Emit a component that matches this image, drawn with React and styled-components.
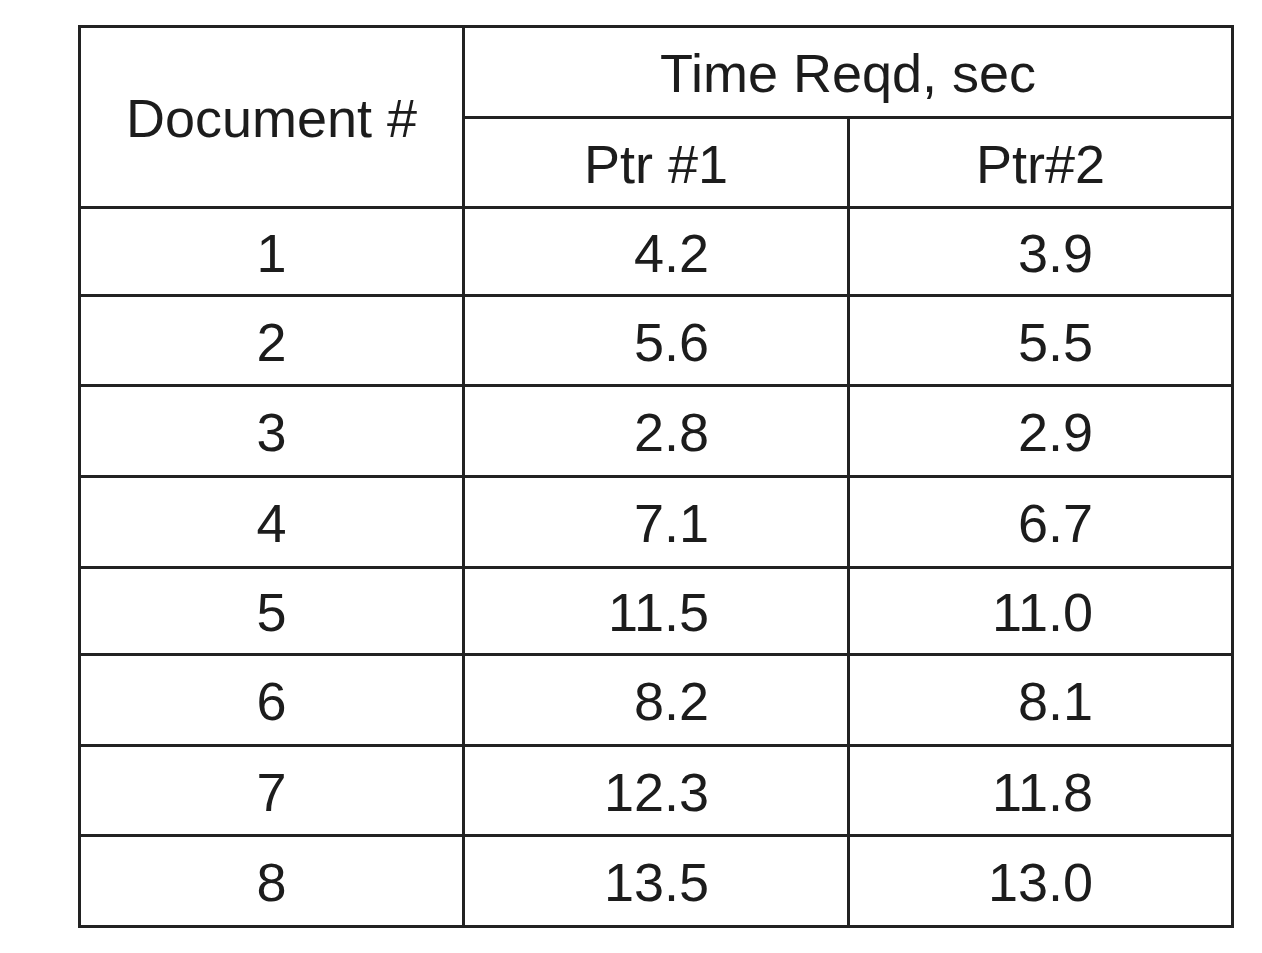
import React from "react";
import styled, { createGlobalStyle } from "styled-components";

const rows = [
  ["1", "4.2", "3.9", 85],
  ["2", "5.6", "5.5", 87],
  ["3", "2.8", "2.9", 88],
  ["4", "7.1", "6.7", 88],
  ["5", "11.5", "11.0", 84],
  ["6", "8.2", "8.1", 88],
  ["7", "12.3", "11.8", 87],
  ["8", "13.5", "13.0", 88],
];

function App() {
  return (
    <>
      <GlobalStyle />
      <Page>
        <Table $rows={rows.map((r) => r[3])}>
          <Cell className="doc-head">Document #</Cell>
          <Cell className="time-head">Time Reqd, sec</Cell>
          <Cell>Ptr #1</Cell>
          <Cell>Ptr#2</Cell>
          {rows.map(([doc, p1, p2]) => (
            <React.Fragment key={doc}>
              <Cell>{doc}</Cell>
              <Cell $num>{p1}</Cell>
              <Cell $num>{p2}</Cell>
            </React.Fragment>
          ))}
        </Table>
      </Page>
    </>
  );
}

export default App;

const GlobalStyle = createGlobalStyle`
  html, body {
    margin: 0;
    background: #fff;
  }
`;

const Page = styled.div`
  padding: 25px 0 0 78px;
  width: 1262px;
  height: 953px;
  box-sizing: border-box;
`;

const Table = styled.div`
  display: inline-grid;
  grid-template-columns: 381px 382px 381px;
  grid-template-rows: 88px 87px ${(p) => p.$rows.map((h) => `${h}px`).join(" ")};
  gap: 3px;
  padding: 3px;
  background: #222;

  .doc-head {
    grid-row: 1 / span 2;
  }

  .time-head {
    grid-column: 2 / span 2;
  }
`;

const Cell = styled.div`
  display: flex;
  align-items: center;
  justify-content: ${(p) => (p.$num ? "flex-end" : "center")};
  padding: 2px ${(p) => (p.$num ? "138px" : "0")} 0 0;
  background: #fff;
  color: #1c1c1c;
  font-family: "Liberation Sans", Arial, sans-serif;
  font-size: 54px;
  line-height: 1;
`;
